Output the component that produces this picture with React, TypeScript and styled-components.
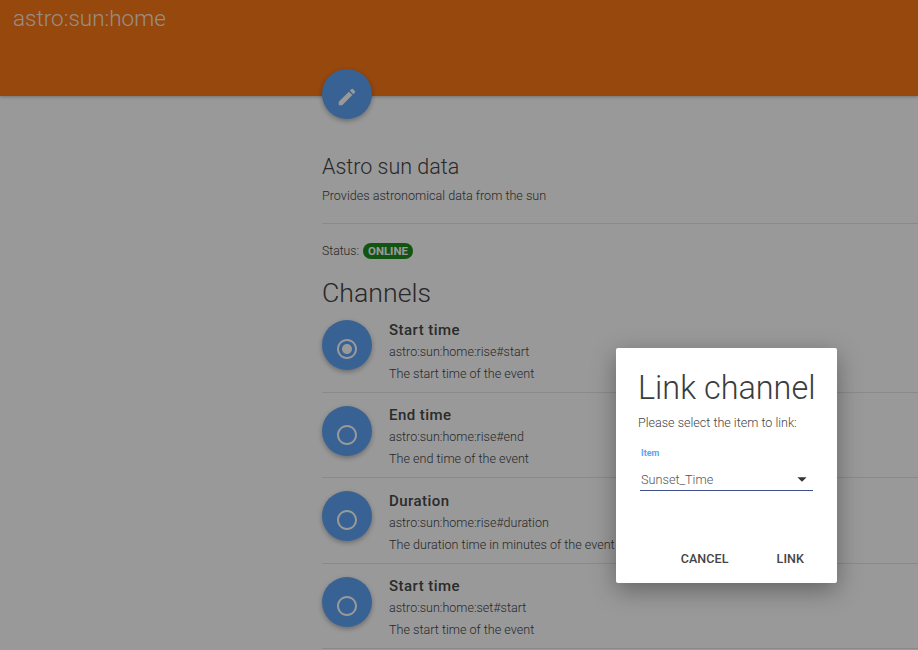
import React from "react";
import styled, { createGlobalStyle } from "styled-components";
import { MdEdit, MdRadioButtonChecked, MdRadioButtonUnchecked, MdArrowDropDown } from "react-icons/md";

const Global = createGlobalStyle`
  html, body { margin: 0; padding: 0; width: 918px; height: 650px; overflow: hidden; background: #fff; }
  body { font-family: Roboto, "Liberation Sans", sans-serif; color: #444; }
  * { box-sizing: border-box; }
`;

const Page = styled.div`
  position: relative;
  width: 918px;
  height: 650px;
  overflow: hidden;
`;

const Header = styled.header`
  height: 96px;
  background: #fa7817;
  box-shadow: 0 1px 3px rgba(0, 0, 0, 0.25);
  padding: 5px 13px;
`;

const Title = styled.h1`
  margin: 0;
  font-size: 22.5px;
  line-height: 26px;
  font-weight: 300;
  color: #fff;
  opacity: 0.85;
`;

const Main = styled.main`
  padding-left: 322px;
  display: flex;
  flex-direction: column;
`;

const Fab = styled.button<{ $top?: boolean }>`
  width: 50px;
  height: 50px;
  flex: none;
  border: 0;
  padding: ${(p) => (p.$top ? "5px" : "8px")} 0 0;
  border-radius: 50%;
  background: #5ea4f7;
  color: #fff;
  display: flex;
  align-items: center;
  justify-content: center;
  box-shadow: 0 2px 5px rgba(0, 0, 0, 0.3);
  margin-top: ${(p) => (p.$top ? "-27px" : "13px")};
`;

const ThingName = styled.h2`
  margin: 35px 0 0;
  font-size: 21.5px;
  line-height: 26px;
  font-weight: 300;
  color: #444;
`;

const Description = styled.p`
  margin: 8px 0 0;
  font-size: 12.6px;
  line-height: 16px;
  font-weight: 300;
  color: #444;
`;

const Divider = styled.hr`
  margin: 19px 0 0;
  border: 0;
  border-top: 1px solid #e6e6e6;
`;

const StatusRow = styled.div`
  margin-top: 19px;
  height: 16px;
  display: flex;
  align-items: center;
  gap: 4px;
  font-size: 12.2px;
  line-height: 14px;
  font-weight: 300;
`;

const Badge = styled.span`
  height: 16px;
  padding: 0 5px;
  border-radius: 8px;
  background: #1f8c1f;
  color: #fff;
  font-size: 11.4px;
  line-height: 17px;
  font-weight: 700;
`;

const SectionTitle = styled.h2`
  margin: 20px 0 0;
  font-size: 26.7px;
  line-height: 28px;
  font-weight: 300;
  color: #444;
`;

const ChannelList = styled.ul`
  list-style: none;
  margin: 0;
  padding: 0;
`;

const ChannelRow = styled.li`
  height: 85.5px;
  display: flex;
  align-items: flex-start;
  gap: 17px;
  border-bottom: 1px solid #e6e6e6;
`;

const ChannelText = styled.div`
  display: flex;
  flex-direction: column;
  white-space: nowrap;
  padding-top: 12.5px;
`;

const ChannelName = styled.div`
  font-size: 15px;
  line-height: 21px;
  font-weight: 500;
  color: #484848;
  letter-spacing: 0.45px;
`;

const ChannelUid = styled.div`
  font-size: 12.5px;
  line-height: 22px;
  font-weight: 300;
  color: #444;
`;

const ChannelInfo = styled.div`
  font-size: 12.6px;
  line-height: 22px;
  font-weight: 300;
  color: #444;
`;

const Scrim = styled.div`
  position: absolute;
  inset: 0;
  background: rgba(0, 0, 0, 0.4);
`;

const Dialog = styled.div`
  position: absolute;
  left: 616px;
  top: 348px;
  width: 221px;
  height: 235px;
  background: #fff;
  border-radius: 2px;
  box-shadow: 0 7px 24px rgba(0, 0, 0, 0.35);
  display: flex;
  flex-direction: column;
  padding: 20px 22px 0;
`;

const DialogTitle = styled.h2`
  margin: 0;
  font-size: 32.4px;
  line-height: 40px;
  font-weight: 300;
  color: #3c3c3c;
  white-space: nowrap;
`;

const DialogText = styled.p`
  margin: 7px 0 0;
  font-size: 12.55px;
  line-height: 16px;
  font-weight: 300;
  color: #444;
`;

const FieldLabel = styled.div`
  margin-top: 16px;
  font-size: 9px;
  line-height: 12px;
  font-weight: 700;
  color: #5aa5f5;
  padding-left: 3px;
`;

const Select = styled.div`
  margin-top: 10px;
  margin-left: 2px;
  height: 22px;
  width: 173px;
  border-bottom: 1px solid #3f4f90;
  display: flex;
  align-items: center;
  justify-content: space-between;
  padding: 0 0 1px 1px;
  font-size: 12.7px;
  font-weight: 300;
  color: #555;
`;

const Actions = styled.div`
  margin-top: auto;
  margin-right: 11px;
  height: 48px;
  display: flex;
  justify-content: flex-end;
  gap: 48px;
`;

const ActionButton = styled.button`
  border: 0;
  background: none;
  padding: 0;
  font-family: inherit;
  font-size: 12.5px;
  line-height: 16px;
  font-weight: 500;
  color: #444;
  letter-spacing: 0.1px;
`;

const channels = [
  { name: "Start time", uid: "astro:sun:home:rise#start", info: "The start time of the event", linked: true },
  { name: "End time", uid: "astro:sun:home:rise#end", info: "The end time of the event", linked: false },
  { name: "Duration", uid: "astro:sun:home:rise#duration", info: "The duration time in minutes of the event", linked: false },
  { name: "Start time", uid: "astro:sun:home:set#start", info: "The start time of the event", linked: false },
];

export default function App() {
  return (
    <Page>
      <Global />
      <Header>
        <Title>astro:sun:home</Title>
      </Header>
      <Main>
        <Fab $top aria-label="Edit">
          <MdEdit size={22} />
        </Fab>
        <ThingName>Astro sun data</ThingName>
        <Description>Provides astronomical data from the sun</Description>
        <Divider />
        <StatusRow>
          Status: <Badge>ONLINE</Badge>
        </StatusRow>
        <SectionTitle>Channels</SectionTitle>
        <ChannelList>
          {channels.map((c) => (
            <ChannelRow key={c.uid}>
              <Fab as="div">
                {c.linked ? <MdRadioButtonChecked size={24} /> : <MdRadioButtonUnchecked size={24} />}
              </Fab>
              <ChannelText>
                <ChannelName>{c.name}</ChannelName>
                <ChannelUid>{c.uid}</ChannelUid>
                <ChannelInfo>{c.info}</ChannelInfo>
              </ChannelText>
            </ChannelRow>
          ))}
        </ChannelList>
      </Main>
      <Scrim />
      <Dialog>
        <DialogTitle>Link channel</DialogTitle>
        <DialogText>Please select the item to link:</DialogText>
        <FieldLabel>Item</FieldLabel>
        <Select>
          Sunset_Time
          <MdArrowDropDown size={22} color="#333" />
        </Select>
        <Actions>
          <ActionButton>CANCEL</ActionButton>
          <ActionButton>LINK</ActionButton>
        </Actions>
      </Dialog>
    </Page>
  );
}
